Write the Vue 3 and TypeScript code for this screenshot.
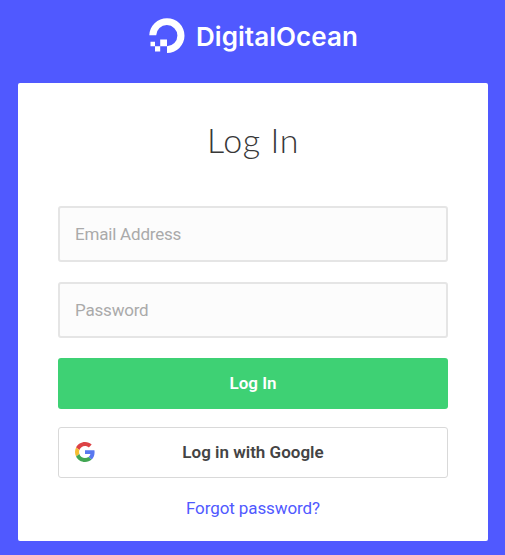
<script setup lang="ts">
import { ref } from 'vue'

const email = ref('')
const password = ref('')
</script>

<template>
  <div class="page">
    <header class="brand">
      <svg class="mark" viewBox="0 0 36 36" width="36" height="36" aria-hidden="true">
        <path
          fill="#fff"
          d="M18 35V28.2A10.6 10.6 0 1 0 7.2 17.3H.3A17.6 17.4 0 1 1 18 35Z M11.2 21.4h6.8v6.8h-6.8Z M6 28.2h5.2v5.2H6Z M1.5 23.8h4.5v4.4H1.5Z"
        />
      </svg>
      <span class="wordmark">DigitalOcean</span>
    </header>
    <main class="card">
      <h1 class="title">Log In</h1>
      <form class="form" @submit.prevent>
        <input v-model="email" class="field" type="email" placeholder="Email Address" />
        <input v-model="password" class="field" type="password" placeholder="Password" />
        <button class="submit" type="submit">Log In</button>
        <button class="google" type="button">
          <svg class="google-icon" viewBox="0 0 48 48" width="20" height="20" aria-hidden="true">
            <path fill="#dd4245" d="M24 9.5c3.54 0 6.71 1.22 9.21 3.6l6.85-6.85C35.9 2.38 30.47 0 24 0 14.62 0 6.51 5.38 2.56 13.22l7.98 6.19C12.43 13.72 17.74 9.5 24 9.5z" />
            <path fill="#5878ef" d="M46.98 24.55c0-1.57-.15-3.09-.38-4.55H24v9.02h12.94c-.58 2.96-2.26 5.48-4.78 7.18l7.73 6c4.51-4.18 7.09-10.36 7.09-17.65z" />
            <path fill="#f5bd32" d="M10.53 28.59c-.48-1.45-.76-2.99-.76-4.59s.27-3.14.76-4.59l-7.98-6.19C.92 16.46 0 20.12 0 24c0 3.88.92 7.54 2.56 10.78l7.97-6.19z" />
            <path fill="#41a653" d="M24 48c6.48 0 11.93-2.13 15.89-5.81l-7.73-6c-2.15 1.45-4.92 2.3-8.16 2.3-6.26 0-11.57-4.22-13.47-9.91l-7.98 6.19C6.51 42.62 14.62 48 24 48z" />
          </svg>
          <span>Log in with Google</span>
        </button>
      </form>
      <a class="forgot" href="#">Forgot password?</a>
    </main>
  </div>
</template>

<style>
body {
  background: #5059ff;
}
</style>

<style scoped>
.page {
  box-sizing: border-box;
  height: 555px;
  padding: 18px 17px 14px 18px;
  background: #5059ff;
  font-family: Roboto, sans-serif;
  overflow: hidden;
}
.brand {
  display: flex;
  height: 65px;
  padding-left: 131px;
}
.mark {
  flex: none;
}
.wordmark {
  margin-left: 11px;
  font: 600 26px/38px Inter, sans-serif;
  letter-spacing: 0.05px;
  color: #fff;
}
.card {
  box-sizing: border-box;
  height: 458px;
  padding: 35px 40px 0;
  border-radius: 2px;
  background: #fff;
  text-align: center;
}
.title {
  margin: 0 0 44px;
  font: 300 34px/44px Lato, sans-serif;
  letter-spacing: 0.6px;
  color: #383838;
}
.form {
  display: flex;
  flex-direction: column;
}
.field {
  box-sizing: border-box;
  width: 100%;
  height: 56px;
  margin: 0 0 20px;
  padding: 0 15px;
  border: 2px solid #e5e5e5;
  border-radius: 3px;
  background: #fcfcfc;
  font: 400 17px/20px Roboto, sans-serif;
  letter-spacing: -0.2px;
  color: #444;
  outline: none;
}
.field::placeholder {
  color: #aaa;
  opacity: 1;
}
.submit,
.google {
  box-sizing: border-box;
  height: 51px;
  padding: 0 0 2px;
  border-radius: 3px;
  font: 600 17px/20px Roboto, sans-serif;
}
.submit {
  margin: 0 0 18px;
  border: 0;
  background: #3ed174;
  color: #fff;
}
.google {
  display: grid;
  grid-template-columns: 20px 1fr 20px;
  align-items: center;
  padding: 0 16px 2px;
  border: 1px solid #d9d9d9;
  background: #fff;
  color: #444;
}
.forgot {
  display: inline-block;
  margin-top: 20px;
  font-size: 17px;
  line-height: 20px;
  letter-spacing: -0.1px;
  color: #5059ff;
  text-decoration: none;
}
</style>
